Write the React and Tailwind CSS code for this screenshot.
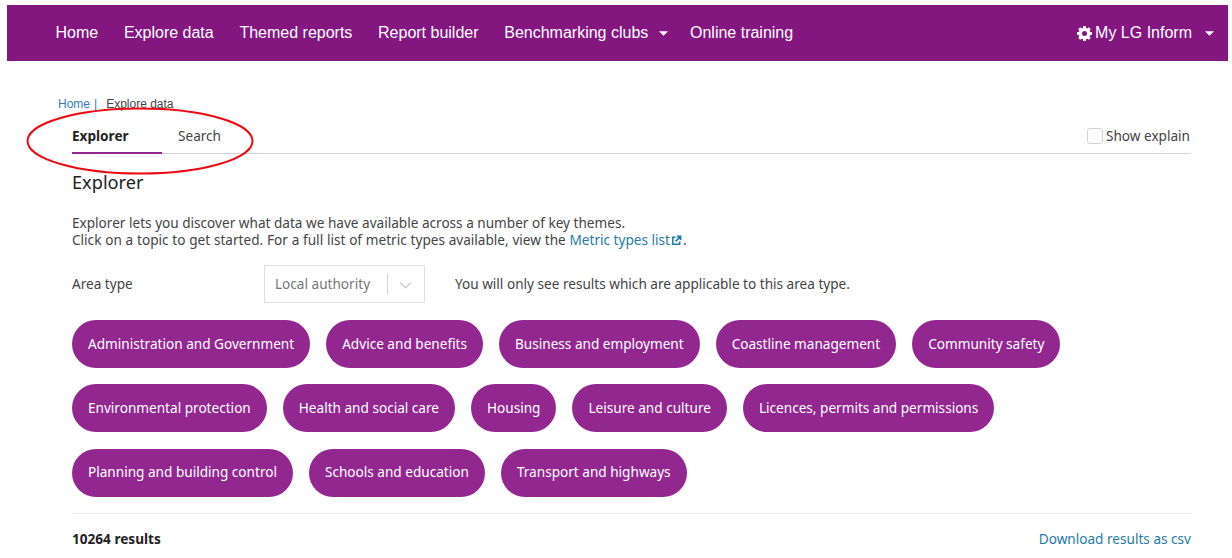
import React from "react";

const rows = [
  ["Administration and Government", "Advice and benefits", "Business and employment", "Coastline management", "Community safety"],
  ["Environmental protection", "Health and social care", "Housing", "Leisure and culture", "Licences, permits and permissions"],
  ["Planning and building control", "Schools and education", "Transport and highways"],
];

function Caret({ className }) {
  return (
    <svg viewBox="0 0 10 5" className={className} fill="currentColor">
      <path d="M0 0h10L5 5z" />
    </svg>
  );
}

function Gear() {
  return (
    <svg viewBox="0 0 24 24" className="w-[15px] h-[15px]" fill="currentColor">
      <path fillRule="evenodd" d="M10 1h4l.6 3.100 1.700.7L19 3l3 3-1.800 2.700.7 1.700L24 11v4l-3.100.6-.7 1.700L22 20l-3 3-2.700-1.800-1.700.7L14 25h-4l-.6-3.100-1.700-.7L5 23l-3-3 1.800-2.700-.7-1.700L0 15v-4l3.100-.6.7-1.700L2 6l3-3 2.700 1.800 1.700-.7zM12 9a4 4 0 1 0 0 8 4 4 0 0 0 0-8z" transform="translate(0 -1)" />
    </svg>
  );
}

export default function App() {
  return (
    <div className="relative h-[558px] w-[1232px] overflow-hidden bg-white font-['Noto_Sans',sans-serif] text-[#444]">
      <div className="pt-[5px] pl-[7px] pr-[4px]">
        <nav className="flex h-[56px] items-center justify-between bg-[#84167f] pl-[48.5px] pr-[14px] font-['Liberation_Sans',sans-serif] text-[16px] text-white">
          <div className="flex items-center gap-[25.7px]">
            <span>Home</span>
            <span>Explore data</span>
            <span>Themed reports</span>
            <span>Report builder</span>
            <span className="flex items-center gap-[11px]">
              Benchmarking clubs
              <Caret className="w-[9px] h-[5px]" />
            </span>
            <span className="-ml-[4px]">Online training</span>
          </div>
          <div className="flex items-center gap-[3.5px]">
            <Gear />
            <span>My LG Inform</span>
            <Caret className="ml-[9.5px] w-[9px] h-[5px]" />
          </div>
        </nav>
      </div>

      <main className="pl-[72px] pr-[41px]">
        <div className="-ml-[14px] mt-[36px] flex h-[14px] items-center font-['Liberation_Sans',sans-serif] text-[12px] leading-none">
          <span className="text-[#337ab7]">Home</span>
          <span className="ml-[4px] text-[#337ab7]">|</span>
          <span className="ml-[9px] text-[#444]">Explore data</span>
        </div>

        <div className="mt-[2px] flex h-[41px] items-stretch justify-between border-b border-[#d4d4d8]">
          <div className="flex">
            <div className="-mb-px w-[90px] border-b-2 border-[#92278f] pt-[14px] text-[13.6px] font-bold leading-[18px] text-[#222]">Explorer</div>
            <div className="ml-[16px] pt-[14px] text-[13.6px] leading-[18px] text-[#444]">Search</div>
          </div>
          <label className="flex items-center gap-[3px] pr-[1px] pt-[6px] text-[13.6px] text-[#444]">
            <span className="h-[16px] w-[16px] rounded-[3px] border border-[#d1d5db] bg-white" />
            Show explain
          </label>
        </div>

        <h1 className="mt-[16px] text-[18.2px] font-normal leading-[24px] text-[#222]">Explorer</h1>

        <p className="mt-[20px] text-[13.6px] leading-[17px] text-[#444]">
          Explorer lets you discover what data we have available across a number of key themes.
          <br />
          <span className="[word-spacing:0.25px]">Click on a topic to get started. For a full list of metric types available, view the </span>
          <a className="text-[#1f7aa8]">Metric types list</a>
          <svg viewBox="0 0 12 12" className="mx-[1px] inline-block h-[11px] w-[11px] align-[-1px] text-[#1f7aa8]" fill="none" stroke="currentColor" strokeWidth="1.700">
            <path d="M5 2.500H2v7.500h7.500V7M6.500 1.500h4v4M10.500 1.500 5 7" />
          </svg>
          .
        </p>

        <div className="mt-[17px] flex items-center text-[13.6px]">
          <span className="w-[192px]">Area type</span>
          <div className="flex h-[38px] w-[161px] items-center border border-[#e0e0e0] pl-[10px] text-[#777]">
            <span className="w-[112px]">Local authority</span>
            <span className="h-[20px] w-px bg-[#d4d4d4]" />
            <svg viewBox="0 0 20 20" className="ml-[9px] h-[17px] w-[17px] text-[#ccc]" fill="currentColor">
              <path d="M4.500 7.300 3.300 8.500 10 15l6.700-6.500-1.200-1.200L10 12.600z" />
            </svg>
          </div>
          <span className="ml-[30px]">You will only see results which are applicable to this area type.</span>
        </div>

        <div className="mt-[17px] flex flex-col gap-[16.25px]">
          {rows.map((row, i) => (
            <div key={i} className="flex gap-[16px]">
              {row.map((t) => (
                <span key={t} className="flex h-[48px] items-center rounded-full bg-[#92278f] px-[16px] text-[13.6px] text-white">
                  {t}
                </span>
              ))}
            </div>
          ))}
        </div>

        <div className="mt-[16.5px] flex items-start justify-between border-t border-[#e8e8e8] pt-[15px] text-[13.6px] leading-[20px]">
          <span className="font-bold text-[#222]">10264 results</span>
          <a className="text-[#1f7aa8]">Download results as csv</a>
        </div>
      </main>

      <svg className="pointer-events-none absolute left-[26px] top-[106px] h-[70px] w-[230px]" viewBox="0 0 230 70" fill="none">
        <ellipse cx="114" cy="35" rx="112.500" ry="32.500" stroke="#ee0a14" strokeWidth="2" />
      </svg>
    </div>
  );
}
